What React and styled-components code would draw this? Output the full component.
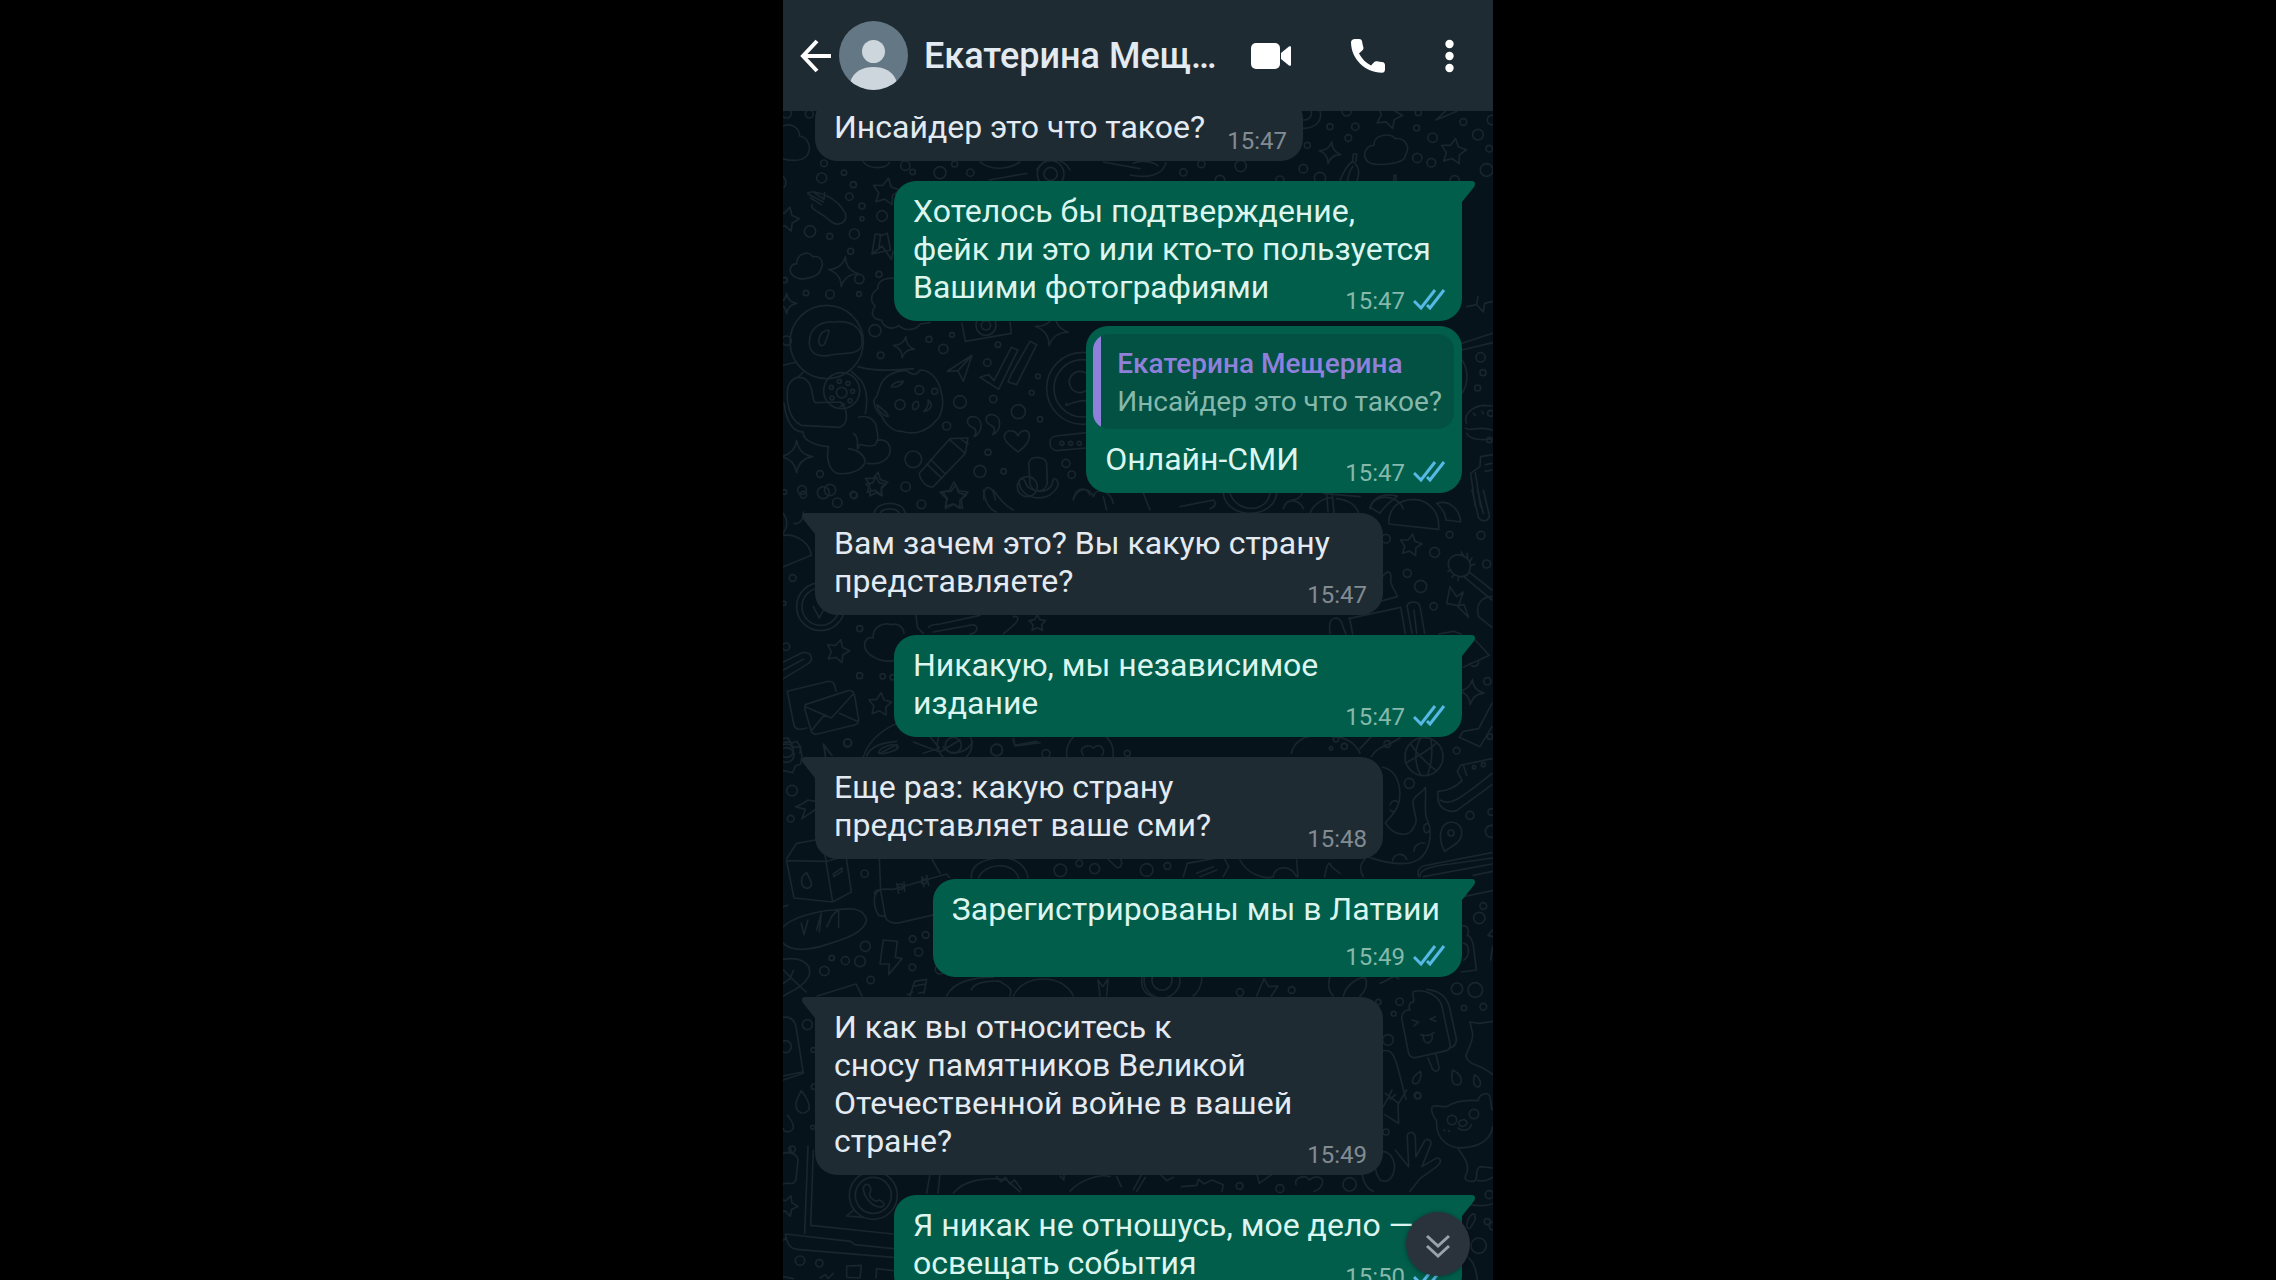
import React from "react";
import styled, { createGlobalStyle } from "styled-components";

const color = {
  panel: "#1f2b33",
  sent: "#005e4b",
  quote: "#025143",
  wall: "#07131a",
  doodle: "#18262d",
  text: "#e3eaf2",
  sentText: "#dcf5ef",
  muted: "#828b92",
  sentMuted: "#86b8ab",
  accent: "#8f80dc",
  tick: "#56b9e6",
};

const GlobalStyle = createGlobalStyle`
  * { box-sizing: border-box; }
  body {
    margin: 0;
    background: #000;
    font-family: Roboto, "Noto Sans", sans-serif;
  }
`;

const Phone = styled.main`
  position: relative;
  display: flex;
  flex-direction: column;
  width: 100%;
  max-width: 710px;
  height: 100vh;
  margin: 0 auto;
  overflow: hidden;
  background: ${color.wall};
`;

const Header = styled.header`
  z-index: 1;
  display: flex;
  flex: none;
  align-items: center;
  height: 111px;
  padding: 0 39px 0 17px;
  background: ${color.panel};
`;

const IconButton = styled.button`
  display: flex;
  flex: none;
  align-items: center;
  justify-content: center;
  padding: 0;
  border: 0;
  background: none;
  color: #fff;
  cursor: pointer;
`;

const Avatar = styled.svg`
  flex: none;
  width: 69px;
  height: 69px;
  margin: 0 16px 0 7px;
`;

const Title = styled.h1`
  flex: 1;
  min-width: 0;
  margin: 0 32px 0 0;
  overflow: hidden;
  color: ${color.text};
  font-size: 36px;
  font-weight: 500;
  line-height: 44px;
  text-overflow: ellipsis;
  white-space: nowrap;
`;

const Actions = styled.div`
  display: flex;
  align-items: center;
  gap: 60px;
`;

const Conversation = styled.section`
  position: relative;
  flex: 1;
  min-height: 0;
  overflow: hidden;
`;

const Wallpaper = styled.svg`
  position: absolute;
  inset: 0;
  width: 100%;
  height: 100%;
  fill: none;
  stroke: ${color.doodle};
  stroke-width: 5;
  stroke-linecap: round;
  stroke-linejoin: round;
`;

const Messages = styled.ol`
  position: relative;
  display: flex;
  flex-direction: column;
  gap: 20px;
  margin: -14px 0 0;
  padding: 0 31px 0 32px;
  list-style: none;
`;

const Bubble = styled.li`
  position: relative;
  flex: none;
  align-self: ${(p) => (p.$sent ? "flex-end" : "flex-start")};
  width: ${(p) => (p.$full ? "568px" : "auto")};
  max-width: 88%;
  margin-top: ${(p) => (p.$joined ? "-15px" : "0")};
  border-radius: 22px;
  border-top-left-radius: ${(p) => (p.$tail && !p.$sent ? "0" : "22px")};
  border-top-right-radius: ${(p) => (p.$tail && p.$sent ? "0" : "22px")};
  background: ${(p) => (p.$sent ? color.sent : color.panel)};
  color: ${(p) => (p.$sent ? color.sentText : color.text)};
`;

const Tail = styled.svg`
  position: absolute;
  top: 0;
  ${(p) => (p.$sent ? "left: calc(100% - 1px);" : "right: calc(100% - 1px); transform: scaleX(-1);")}
  width: 15px;
  height: 22px;
  fill: ${(p) => (p.$sent ? color.sent : color.panel)};
`;

const Body = styled.div`
  display: grid;
  grid-template-columns: ${(p) => (p.$layout === "inline" ? "1fr auto" : "1fr")};
  column-gap: 16px;
  padding: 11px 16px 0 19px;
`;

const Text = styled.p`
  grid-area: 1 / 1;
  margin: 0;
  padding: ${(p) => (p.$layout === "stacked" ? "0 6px 0 0" : "0 6px 15px 0")};
  font-size: 32px;
  line-height: 38px;
  white-space: pre;
`;

const Meta = styled.div`
  display: flex;
  grid-area: ${(p) => (p.$layout === "inline" ? "1 / 2" : p.$layout === "stacked" ? "2 / 1" : "1 / 1")};
  align-items: center;
  align-self: end;
  justify-self: end;
  gap: 8px;
  padding: ${(p) => (p.$layout === "stacked" ? "17px 0 8px" : "0 0 8px")};
  color: ${(p) => (p.$sent ? color.sentMuted : color.muted)};
  font-size: 24px;
  line-height: 24px;
`;

const Quote = styled.blockquote`
  margin: 0;
  padding: 8px 8px 0 7px;
`;

const QuoteCard = styled.div`
  padding: 11px 12px 8px 24px;
  border-radius: 16px;
  background: linear-gradient(to right, ${color.accent} 8px, ${color.quote} 8px);
  color: ${color.sentMuted};
  font-size: 28px;
  line-height: 38px;
  white-space: nowrap;
`;

const QuoteName = styled.cite`
  display: block;
  color: ${color.accent};
  font-style: normal;
  font-weight: 500;
`;

const ScrollDown = styled(IconButton)`
  position: absolute;
  right: 23px;
  bottom: 4px;
  width: 64px;
  height: 64px;
  padding-top: 4px;
  border-radius: 50%;
  background: #2a333b;
  box-shadow: 0 1px 5px rgba(0, 0, 0, 0.35);
  color: #98a2a9;
`;

const point = (x, y, r, deg) => {
  const a = (deg * Math.PI) / 180;
  return `${(x + r * Math.sin(a)).toFixed(1)} ${(y - r * Math.cos(a)).toFixed(1)}`;
};

const starPath = ([x, y, r, turn = 0]) =>
  `M${Array.from({ length: 10 }, (_, i) => point(x, y, i % 2 ? r * 0.52 : r, turn + i * 36)).join("L")}Z`;

const sparkPath = ([x, y, r, turn = 0]) => {
  let d = `M${point(x, y, r, turn)}`;
  for (let i = 0; i < 4; i += 1) {
    d += `Q${point(x, y, r * 0.2, turn + i * 90 + 45)} ${point(x, y, r, turn + (i + 1) * 90)}`;
  }
  return `${d}Z`;
};

const sketches = [
  {
    x: 780, y: 0,
    rings: [[88, 342, 12], [20, 340, 14], [132, 490, 10], [376, 497, 14], [524, 492, 9]],
    paths: ["M0 384C30 362 60 384 58 408C88 412 96 448 80 468C60 488 20 480 0 474", "M250 486C270 510 320 506 328 488", "M600 486C640 520 700 500 720 486M770 510C790 470 850 470 870 510M970 486L1080 506"],
  },
  {
    x: 1130, y: 0,
    rings: [[650, 334, 14], [600, 380, 9], [676, 380, 11], [655, 414, 10], [532, 436, 9], [860, 384, 9], [865, 338, 9], [1000, 366, 10], [1044, 404, 16], [908, 413, 14], [862, 474, 14], [904, 488, 13], [1078, 446, 10], [1070, 510, 19], [520, 506, 13], [570, 534, 17], [450, 540, 12], [160, 517, 11], [332, 498, 17], [270, 540, 14], [214, 492, 11], [974, 541, 14], [1086, 360, 14]],
    stars: [[776, 345, 42, 20], [970, 455, 40, 10]],
    sparks: [[600, 458, 33, 10]],
    paths: [
      "M718 488C692 470 706 436 732 436C730 404 780 396 796 416C828 412 842 446 826 466C826 494 740 498 718 488Z",
      "M520 385C560 384 578 360 570 334M520 360C540 360 546 346 544 334",
      "M918 360L946 334M918 360L980 334",
      "M628 546C640 516 650 496 668 484C690 500 688 526 680 546M668 484L670 462L680 462L678 484M652 546C654 530 660 512 668 500",
      "M792 546L792 526L798 526L798 546",
      "M0 525C50 536 100 526 108 488M10 490C30 480 70 484 84 498",
    ],
  },
  {
    x: 780, y: 170,
    rings: [[125, 24, 15], [192, 8, 8], [220, 44, 9], [208, 80, 11], [246, 108, 9], [246, 146, 6], [306, 138, 16], [90, 184, 17], [149, 199, 9], [223, 192, 15], [212, 244, 9], [297, 313, 9], [238, 327, 14], [78, 369, 8], [150, 373, 13], [237, 372, 7], [14, 330, 8], [285, 482, 18], [447, 508, 9], [516, 494, 7], [490, 537, 14], [302, 556, 10], [20, 512, 14], [654, 524, 8], [622, 578, 11], [774, 619, 7], [755, 668, 7], [540, 696, 19], [640, 687, 11], [715, 725, 21], [500, 768, 12], [780, 748, 8], [400, 868, 25], [624, 847, 9], [600, 904, 18], [671, 904, 8], [858, 880, 12], [875, 914, 11], [120, 912, 10], [66, 960, 13], [150, 960, 17], [220, 974, 10], [377, 950, 14], [13, 966, 7], [480, 8, 18], [571, 8, 11], [398, 6, 8], [140, 516, 110], [185, 662, 54], [185, 668, 16], [154, 652, 6], [178, 634, 6], [204, 640, 6], [218, 664, 6], [210, 692, 6], [156, 684, 6], [360, 704, 15], [418, 660, 13], [464, 664, 9], [812, 12, 40], [812, 12, 20], [618, 466, 30], [618, 466, 14], [908, 655, 108], [908, 655, 86], [900, 636, 32], [846, 820, 6], [872, 820, 6], [898, 820, 6]],
    stars: [[318, 66, 42, 10], [20, 148, 38, 15], [288, 942, 36, 10], [522, 980, 44, 0]],
    sparks: [[190, 305, 45, 8], [372, 532, 32, 10], [816, 478, 50, 10], [50, 860, 48, 0], [20, 400, 30, 0]],
    paths: [
      "M10 20C20 30 20 45 12 52",
      "M84 68C110 60 170 80 196 130C204 160 170 172 150 152C120 124 90 120 96 104M84 72L130 96M92 84L124 104M100 66L132 88L134 68",
      "M276 250L286 192L302 194L296 238M300 198L322 190L332 240L276 252L306 228L334 268L340 244",
      "M40 318C20 300 36 280 50 282C50 250 88 240 98 260C124 256 134 280 122 298C118 322 60 336 40 318Z",
      "M346 326C320 320 290 332 294 356C270 370 270 396 286 408C268 430 280 450 304 450C310 474 340 482 356 466C376 486 410 480 420 462L450 458",
      "M88 520C86 468 130 454 160 456C210 450 250 470 246 520C244 560 180 546 150 556C110 562 90 550 88 520ZM116 514C118 490 134 480 146 480C150 492 138 506 134 522C126 532 116 526 116 514Z",
      "M50 576L10 586M54 622L70 606M214 604L244 632C262 660 262 700 256 730M234 590C290 606 340 600 400 596",
      "M24 650C40 610 80 616 92 650C100 670 96 690 106 698L180 696C206 720 206 760 180 772L64 766C30 750 16 700 24 650ZM12 700C20 760 40 786 70 786C66 812 110 828 146 830C136 870 150 900 170 910C210 916 250 900 256 874C250 846 220 838 206 836M236 742C262 734 290 748 290 780C296 800 296 812 284 826C250 836 236 810 236 834M262 880C300 886 334 868 330 834C326 812 304 806 290 812M180 696L194 704L180 710M220 790C236 800 232 820 232 836",
      "M300 650C310 616 350 600 380 602C390 612 410 620 420 600C460 600 480 640 484 670C494 700 484 740 468 752C440 786 400 796 364 784C330 784 310 750 306 740C284 720 274 690 290 680L300 650ZM334 650C340 636 356 634 370 634C366 646 346 654 334 650ZM290 704C310 720 326 730 324 740C310 738 294 724 290 704ZM400 718C394 704 402 694 412 694C422 706 412 722 400 718ZM432 724C440 716 448 704 444 690C460 700 456 720 432 724Z",
      "M502 604L576 556L550 634L534 602L502 604ZM534 602L576 556",
      "M600 622L626 614L642 632L694 532L714 540L656 658L600 622ZM684 636L694 612L750 514L770 524L710 644L684 636Z",
      "M546 460L556 514L694 490L690 456",
      "M574 770C556 760 560 738 582 740C612 744 608 790 582 800C590 788 592 778 574 770ZM630 764C612 754 616 732 638 734C668 738 664 784 638 794C646 782 648 772 630 764Z",
      "M714 846C690 826 668 812 674 794C684 776 708 780 714 798C722 778 746 776 748 796C750 818 730 834 714 846Z",
      "M920 788L828 798C804 800 804 838 828 842L920 834",
      "M418 910L510 806L564 804L556 850L460 950C440 956 420 930 418 910ZM440 882L484 924M452 868L496 912M508 808L556 850M540 806L564 822",
      "M746 880C750 856 794 856 800 880L802 940C796 970 756 970 750 940ZM718 940C724 990 810 1004 834 946C836 926 818 918 818 936C812 976 744 970 736 936C730 920 716 924 718 940Z",
      "M612 990C606 940 640 940 646 990M880 986C890 950 920 950 930 975",
      "M628 30L740 10M860 700C850 720 870 690 924 692",
    ],
  },
  {
    x: 1070, y: 300,
    rings: [[1232, 172, 14], [1239, 218, 9], [1223, 264, 9], [1262, 340, 9], [1258, 420, 8]],
    paths: [
      "M1190 20L1220 14L1224 -10M1220 14L1240 36L1244 10L1268 4M1176 130L1268 100M1176 150L1268 128M1176 180C1196 210 1196 250 1176 280",
      "M1190 370C1180 350 1200 320 1240 316L1268 318M1186 384C1196 396 1230 376 1268 390M1190 400C1200 420 1240 422 1268 416M1210 340L1216 346M1236 334L1240 342",
      "M1202 520L1230 500L1232 470L1268 464M1202 520L1216 620M1216 518L1232 620M1246 494L1266 490M1246 514L1266 510",
      "M10 600C20 560 60 560 70 590C80 560 120 570 130 610M100 590L110 630M220 580L240 630M330 620L430 600C440 610 436 622 420 626M460 580C470 660 610 660 620 580M480 580C500 640 590 640 600 580M640 626C650 590 690 600 700 626M760 580L870 590M900 626C910 580 980 580 1000 626",
    ],
  },
  {
    x: 780, y: 490,
    rings: [[70, 14, 10], [172, 38, 14], [222, 16, 10], [424, 43, 13], [38, 264, 10], [18, 470, 11], [12, 340, 6], [239, 416, 9], [239, 557, 9], [308, 559, 8], [338, 562, 8], [122, 350, 72], [122, 350, 56], [20, 782, 20], [203, 758, 11], [524, 762, 52], [520, 766, 24], [650, 780, 17], [742, -10, 30], [130, 8, 18]],
    stars: [[288, -8, 32, 0], [522, 22, 38, 8], [173, 484, 36, 15], [300, 644, 36, 5], [772, 400, 26, 0]],
    paths: [
      "M10 136C50 130 90 160 94 196L10 230M10 70C24 90 24 110 10 130",
      "M42 100C58 104 70 90 70 66M100 350L118 384L146 330",
      "M282 70C290 30 370 30 376 70M300 70C310 52 350 52 358 70M610 0C616 40 630 60 650 66M640 0C660 30 680 50 700 60",
      "M350 510C300 524 250 490 254 462C256 444 270 440 280 444C276 412 310 396 332 404C356 398 370 412 372 430",
      "M408 376L412 412L430 430M446 412C450 402 470 404 480 402L600 376M460 426L580 404C600 410 590 430 570 432M700 380C716 376 720 390 700 406L670 432",
      "M10 516L66 488C96 484 104 510 80 524L10 566M10 540L70 508",
      "M22 604L146 574C160 572 166 584 168 604M22 604L42 706C46 720 60 720 80 714M76 644L204 602C216 600 222 606 224 618L236 690C236 700 230 704 220 706L112 732C100 734 94 728 92 718L74 656ZM76 650L154 684L218 614M94 722L134 674M232 694L178 670",
      "M10 746L24 744L34 760L50 754L62 770L60 790M136 800L132 766L156 796M250 800C270 740 330 700 390 690M296 790C296 770 350 756 352 770C354 784 304 794 296 790Z",
      "M700 746L704 766L770 754M450 740L478 774L430 790",
    ],
  },
  {
    x: 1290, y: 490,
    rings: [[479, 134, 10], [573, 136, 12], [434, 187, 15], [590, 222, 12], [352, 250, 12], [392, 289, 18], [431, 349, 11], [288, 146, 13], [592, 574, 11], [138, 748, 8], [163, 769, 9], [123, 775, 5], [292, 762, 10], [500, 782, 10], [402, 800, 57], [358, 880, 15], [540, 976, 12], [604, 966, 10], [483, 1029, 9], [604, 1024, 18], [580, 824, 6], [552, 832, 5], [600, 740, 8]],
    stars: [[362, 166, 34, 10]],
    sparks: [[544, 606, 38, 5]],
    paths: [
      "M296 102C296 50 330 28 372 28C420 30 450 70 446 118ZM240 52C250 20 280 8 322 18C300 36 280 50 270 70ZM440 40C480 28 510 60 512 96L468 90C466 70 456 54 440 40Z",
      "M546 0L566 84C580 100 598 90 598 76L580 0M562 0L580 70",
      "M4 30C30 30 40 10 36 0M60 70C70 40 110 20 126 24M126 0L132 70M140 26C180 30 200 50 206 70M110 10L114 66",
      "M478 236C466 206 496 184 524 200C544 210 544 230 536 250C520 268 490 260 478 236ZM514 186L520 196M532 190L532 204M546 204L540 214M554 222L542 228M474 244L484 240M486 262L492 254M504 272L506 262M524 262L606 330M540 248L606 300M606 320C570 320 556 350 566 380L606 412",
      "M480 290L470 340L500 346L536 382L522 344L506 346L520 306L500 320Z",
      "M276 262C290 240 306 240 302 270C302 290 316 300 322 320L270 334",
      "M120 432C116 400 120 384 140 384C158 388 156 410 168 432M176 386L332 352L346 430M180 390L188 432M350 350C356 330 388 334 390 350L404 430M366 430L352 352M380 430L372 360",
      "M446 432L490 424L514 432M550 444L598 496L520 532M540 520C550 536 564 530 566 516",
      "M606 640L566 716L520 724L508 742L570 770L606 710",
      "M4 790C10 760 40 740 60 740M124 740C170 740 196 760 210 790M210 776L244 740M244 800C260 770 290 770 330 744",
      "M362 762C380 790 420 830 440 842M346 820C380 800 420 780 440 758M392 744C370 780 376 830 392 856M422 746C430 780 424 830 412 856",
      "M606 806L512 826L502 844L516 872C500 890 470 904 444 904L444 930C450 960 480 968 500 962L606 884M450 930C480 946 500 936 606 850M520 826L530 856",
      "M464 1084C444 1050 446 1000 484 996C520 1000 524 1036 500 1060C486 1070 476 1076 464 1084Z",
      "M278 832C320 840 338 890 326 940C316 970 300 984 286 998C310 1040 360 1044 372 1010C390 990 364 960 370 930C380 910 400 908 406 892C410 930 400 970 412 990C430 1030 420 1100 370 1116C330 1130 260 1110 230 1100M300 944C306 930 316 930 324 936M300 960C310 970 316 962 318 958M402 1008C410 996 420 1000 420 1020C410 1034 400 1030 402 1008ZM372 1084C372 1066 390 1056 404 1060M308 1112C312 1090 340 1086 350 1108",
      "M386 1160C380 1140 390 1130 410 1126L606 1088M400 1160L606 1122M104 1160C110 1120 120 1110 124 1130L150 1150",
    ],
  },
  {
    x: 780, y: 740,
    rings: [[20, 45, 22], [36, 152, 16], [32, 236, 10], [203, 9, 12], [254, 401, 11], [650, 30, 18], [798, 41, 12], [362, 440, 8], [432, 424, 8], [256, 619, 15], [398, 597, 10], [437, 585, 10], [416, 636, 12], [155, 654, 8], [196, 662, 12], [240, 664, 16], [133, 693, 14], [272, 720, 11], [397, 682, 10], [480, 688, 14], [841, 391, 19], [898, 370, 10], [944, 386, 15], [1042, 40, 9], [930, 40, 70]],
    paths: [
      "M10 8L30 4L40 22L60 20L66 48L62 72L46 78L38 98L10 92M136 40L130 12L150 40",
      "M48 200L66 192L84 180L106 184M46 200L76 208L66 236L104 210",
      "M20 356L50 310L106 300M20 362L140 364L198 348M20 364L42 474L158 486L138 366M158 486L214 456L198 348M140 366L122 300M66 432C60 410 76 400 80 398C86 414 96 420 94 436C86 450 70 446 66 432ZM160 402L186 384L186 394L162 410Z",
      "M10 560C40 530 120 512 160 510C210 504 250 500 260 540C250 580 200 596 120 620C70 632 30 630 10 610M64 550L72 584L84 540M110 570L124 520L118 576M140 560C150 550 150 520 176 512L176 562M10 500L24 496",
      "M298 354L302 452L316 530C320 546 340 552 360 548L480 520M454 354L480 400M284 462C280 450 300 446 340 448L500 402L508 412M300 450C276 460 280 500 296 526L316 530M350 430L356 460M372 426L374 454M426 410L432 440M440 406L446 436",
      "M574 414C570 370 620 356 660 354C710 352 740 380 744 414M596 414C610 370 700 360 716 414",
      "M310 600L352 604L346 652L366 656L326 704L328 672L300 672Z",
      "M10 658C60 650 100 670 86 710C70 740 40 750 10 768M10 690C40 720 60 740 78 756M30 716L40 692M10 730L30 716",
      "M112 768L228 732L246 768M390 768L404 724L440 718L432 760M404 738L436 732M382 764L398 756M416 760L432 756M500 768C520 720 600 710 640 712M574 750C580 730 620 720 660 724C680 740 700 740 690 768M700 768C730 700 850 700 880 768M960 768L954 720L968 740L984 718L980 768",
      "M260 48C270 20 300 8 350 4M300 40L350 14C360 22 350 30 340 32M400 6L480 36L540 0M490 20C510 50 560 40 578 6M700 0L706 18L780 8",
      "M910 46C890 20 930 10 940 24C960 6 980 30 966 46",
      "M980 354L1010 382C1024 386 1030 370 1020 354",
    ],
  },
  {
    x: 1130, y: 860,
    rings: [[50, 30, 19], [112, 18, 10], [1060, 138, 10], [1048, 174, 17], [485, 390, 10], [330, 397, 11], [981, 386, 17], [1036, 390, 22], [1002, 444, 8], [1060, 440, 10], [809, 425, 11], [791, 461, 7], [774, 540, 16], [745, 426, 8], [96, 360, 54], [96, 360, 30], [864, 708, 9]],
    paths: [
      "M160 50L172 10L280 -10L296 20L280 50M200 40L250 20M210 50L260 30M330 0C350 40 400 60 430 50C430 20 480 10 500 50M500 0L504 50M700 50C680 20 700 0 720 -20M870 50C870 30 890 20 960 12L1088 -6M1030 46L1088 34M1000 110L1088 92",
      "M994 200C1010 190 1020 210 1012 226C1036 236 1030 280 1040 330L994 336M1000 250C1020 250 1020 290 1002 300M1088 210L1074 226L1088 230M1088 260L1082 300",
      "M36 350C30 390 50 404 66 408M216 350C216 380 200 400 190 408M380 408L402 356L416 380L444 378L424 408M600 350C590 380 600 400 610 408M640 408C650 370 690 350 706 354C716 380 700 400 690 408M750 370C780 360 790 340 806 356",
      "M852 394C842 400 856 416 850 426C840 424 834 440 840 450C826 448 812 460 816 480L836 580C840 592 850 594 860 592L950 572C960 568 962 560 960 550L936 440C930 410 890 386 852 394ZM890 388C930 392 950 410 958 440L978 530C982 550 974 560 960 564M894 594L908 628C920 640 930 630 926 616L918 584M846 480L866 486L852 498M916 470L900 478L918 484M872 524C890 530 904 524 912 518M880 530C880 556 912 556 906 522",
      "M1088 484L1048 490L1020 486L1028 520C1030 550 1010 570 1008 590C1020 620 1050 610 1088 644",
      "M760 572C790 568 790 590 800 610L828 718M848 668C844 650 862 640 872 634C876 660 862 680 848 668ZM968 630C990 640 1000 660 990 672C974 680 960 670 968 630ZM1034 644C1050 654 1056 670 1048 680C1030 684 1028 664 1034 644ZM780 718L796 704",
    ],
  },
  {
    x: 780, y: 980,
    rings: [[82, 134, 15], [16, 200, 18], [100, 210, 7], [102, 320, 8], [98, 442, 6], [36, 508, 10], [60, 842, 14], [118, 850, 11], [280, 646, 72], [280, 646, 54]],
    stars: [[22, 678, 32, 20]],
    paths: [
      "M10 112C30 108 44 120 48 140L70 280L10 300M10 288L66 276",
      "M64 332C80 352 92 372 86 390C70 408 48 396 48 376C46 360 58 346 64 332ZM22 406C34 420 44 436 38 448C28 460 10 456 10 446",
      "M10 520C20 516 50 516 54 540L48 600C40 620 20 604 10 612M30 500L36 520",
      "M84 498L74 760M100 510L92 736L340 762M16 762L212 784L224 794L340 806M16 762C20 790 30 806 50 808L340 832M20 774L10 780",
      "M222 690L200 708L250 712M250 624C256 606 268 612 272 626C276 636 262 636 272 652C284 668 292 664 298 660C310 664 318 674 306 680C280 686 250 650 250 624Z",
      "M200 858L244 856L240 894L200 892ZM290 866L340 872M290 866L288 894M120 894L136 884L144 896L160 880M10 890L40 896",
      "M450 582L440 640M480 582L474 640M520 640C550 600 620 590 680 600L720 636M650 590L664 606L676 592L690 612L704 600L724 628M840 588L852 600L852 584M870 634C900 600 960 580 990 590M1010 590L1024 620",
    ],
  },
  {
    x: 1130, y: 1090,
    rings: [[862, 16, 10], [768, 126, 9], [329, 288, 10], [450, 296, 12], [659, 283, 20], [1078, 314, 12], [1072, 395, 9], [1046, 467, 23], [966, 90, 14], [1032, 72, 14], [1090, 408, 12]],
    paths: [
      "M786 0L760 50M766 10L806 40L830 0M804 40L806 100L764 74",
      "M920 94C904 70 900 50 912 48C930 46 940 52 950 50C980 30 1020 30 1044 32C1050 10 1070 6 1078 16C1086 30 1080 50 1088 60M920 94C916 150 960 180 1010 172C1060 168 1084 140 1088 110M986 96C1000 84 1010 90 1012 100C1000 116 986 110 986 96ZM984 114C1000 126 1020 120 1024 104M942 120L944 122M956 122L958 124",
      "M986 178C1000 200 1020 220 1010 250C1000 266 1006 276 1030 274C1050 270 1030 240 1050 230L1088 234M1044 272C1060 276 1080 268 1088 262",
      "M840 304L870 266L920 230C940 214 930 200 916 206L876 230L900 170C910 150 890 140 882 156L858 200L856 140C850 120 830 126 832 142L836 230L796 180M696 250C700 280 710 296 730 304M740 200C760 170 790 190 794 230C790 270 770 280 750 270C736 250 730 220 740 200Z",
      "M498 284C490 260 530 252 538 270C560 252 586 264 576 284C570 296 560 302 552 304M154 290L200 286L206 268L222 282L246 270L280 284L276 304M10 300L36 250M20 304L46 262M90 252L110 272L130 262M380 250L388 280L430 250",
      "M1020 344C1050 350 1080 346 1088 340M1012 414C1006 400 1020 370 1034 372L1036 388L1020 416ZM1016 504C1036 520 1040 550 1042 570M1000 420L998 460",
    ],
  },
];

function Sketch({ x, y, rings = [], stars = [], sparks = [], paths }) {
  return (
    <g transform={`translate(${x} ${y}) scale(0.3333)`}>
      {rings.map(([cx, cy, r]) => (
        <circle key={`${cx}-${cy}-${r}`} cx={cx} cy={cy} r={r} />
      ))}
      <path d={[...stars.map(starPath), ...sparks.map(sparkPath), ...paths].join("")} />
    </g>
  );
}

function Ticks() {
  return (
    <svg width="33" height="24" viewBox="0 0 33 24" fill="none" stroke={color.tick} strokeWidth="3" role="img" aria-label="Прочитано">
      <path d="M1 12L8 19L22 1M14 16L17 19L31 1" />
    </svg>
  );
}

const messages = [
  { text: "Инсайдер это что такое?", time: "15:47", layout: "inline" },
  { text: "Хотелось бы подтверждение,\nфейк ли это или кто-то пользуется\nВашими фотографиями", time: "15:47", sent: true, tail: true, full: true },
  { text: "Онлайн-СМИ", time: "15:47", sent: true, joined: true, quote: { name: "Екатерина Мещерина", text: "Инсайдер это что такое?" } },
  { text: "Вам зачем это? Вы какую страну\nпредставляете?", time: "15:47", tail: true, full: true },
  { text: "Никакую, мы независимое\nиздание", time: "15:47", sent: true, tail: true, full: true },
  { text: "Еще раз: какую страну\nпредставляет ваше сми?", time: "15:48", tail: true, full: true },
  { text: "Зарегистрированы мы в Латвии", time: "15:49", sent: true, tail: true, layout: "stacked" },
  { text: "И как вы относитесь к\nсносу памятников Великой\nОтечественной войне в вашей\nстране?", time: "15:49", tail: true, full: true },
  { text: "Я никак не отношусь, мое дело —\nосвещать события", time: "15:50", sent: true, tail: true, full: true },
];

function Message({ text, time, sent, tail, full, joined, layout = "corner", quote }) {
  return (
    <Bubble $sent={sent} $tail={tail} $full={full} $joined={joined}>
      {tail && (
        <Tail $sent={sent} viewBox="0 0 15 22" aria-hidden="true">
          <path d="M0 0H11C14 0 15 3 13 6L1 21V22H0Z" />
        </Tail>
      )}
      {quote && (
        <Quote>
          <QuoteCard>
            <QuoteName>{quote.name}</QuoteName>
            {quote.text}
          </QuoteCard>
        </Quote>
      )}
      <Body $layout={layout}>
        <Text $layout={layout}>{text}</Text>
        <Meta $layout={layout} $sent={sent}>
          <time>{time}</time>
          {sent && <Ticks />}
        </Meta>
      </Body>
    </Bubble>
  );
}

export default function App() {
  return (
    <>
      <GlobalStyle />
      <Phone>
        <Header>
          <IconButton type="button" aria-label="Назад">
            <svg width="32" height="34" viewBox="0 0 32 34" fill="none" stroke="currentColor" strokeWidth="4">
              <path d="M31 17H4M17 2L3 17L17 32" />
            </svg>
          </IconButton>
          <Avatar viewBox="0 0 69 69" role="img" aria-label="Фото профиля">
            <defs>
              <clipPath id="face"><circle cx="34.5" cy="34.5" r="34.5" /></clipPath>
            </defs>
            <g clipPath="url(#face)">
              <rect width="69" height="69" fill="#637884" />
              <circle cx="34.5" cy="30.5" r="11.5" fill="#ced6dd" />
              <path d="M11 62C14 50 24 46 34.500 46S55 50 58 62V69H11Z" fill="#ced6dd" />
            </g>
          </Avatar>
          <Title>Екатерина Мещерина</Title>
          <Actions>
            <IconButton type="button" aria-label="Видеозвонок">
              <svg width="40" height="28" viewBox="0 0 40 28" fill="currentColor">
                <rect x="0" y="1" width="29" height="26" rx="5" />
                <path d="M30 11L38 4.500C39 4 40 4 40 5.500V22.500C40 24 39 24 38 23.500L30 17Z" />
              </svg>
            </IconButton>
            <IconButton type="button" aria-label="Позвонить">
              <svg width="34" height="34" viewBox="0 0 34 34" fill="currentColor">
                <path d="M4 0H8C10 0 11 1 11.200 3C11.500 5 11.800 6.500 12.300 8C12.700 9.300 12.500 10.200 11.500 11.200L8 14.500C11 20 15 24 20 26.500L23 23.200C24 22.200 25 22 26.200 22.300C27.800 22.700 29.300 22.900 31 23.100C33 23.300 34 24.400 34 26.200V30.500C34 32.500 32.800 33.800 31 33.800C14 33.500 0.300 20 0 3.500C0 1.500 1.500 0 4 0Z" />
              </svg>
            </IconButton>
            <IconButton type="button" aria-label="Меню">
              <svg width="9" height="34" viewBox="0 0 9 34" fill="currentColor">
                <circle cx="4.500" cy="5" r="4.200" />
                <circle cx="4.500" cy="17" r="4.200" />
                <circle cx="4.500" cy="29" r="4.200" />
              </svg>
            </IconButton>
          </Actions>
        </Header>
        <Conversation>
          <Wallpaper viewBox="783 111 710 1169" preserveAspectRatio="xMidYMin slice" aria-hidden="true">
            {sketches.map((s) => (
              <Sketch key={`${s.x}-${s.y}`} {...s} />
            ))}
          </Wallpaper>
          <Messages>
            {messages.map((m) => (
              <Message key={m.text} {...m} />
            ))}
          </Messages>
        </Conversation>
        <ScrollDown type="button" aria-label="К последним сообщениям">
          <svg width="24" height="24" viewBox="0 0 24 24" fill="none" stroke="currentColor" strokeWidth="3">
            <path d="M1 2L12 12L23 2M1 12L12 22L23 12" />
          </svg>
        </ScrollDown>
      </Phone>
    </>
  );
}
